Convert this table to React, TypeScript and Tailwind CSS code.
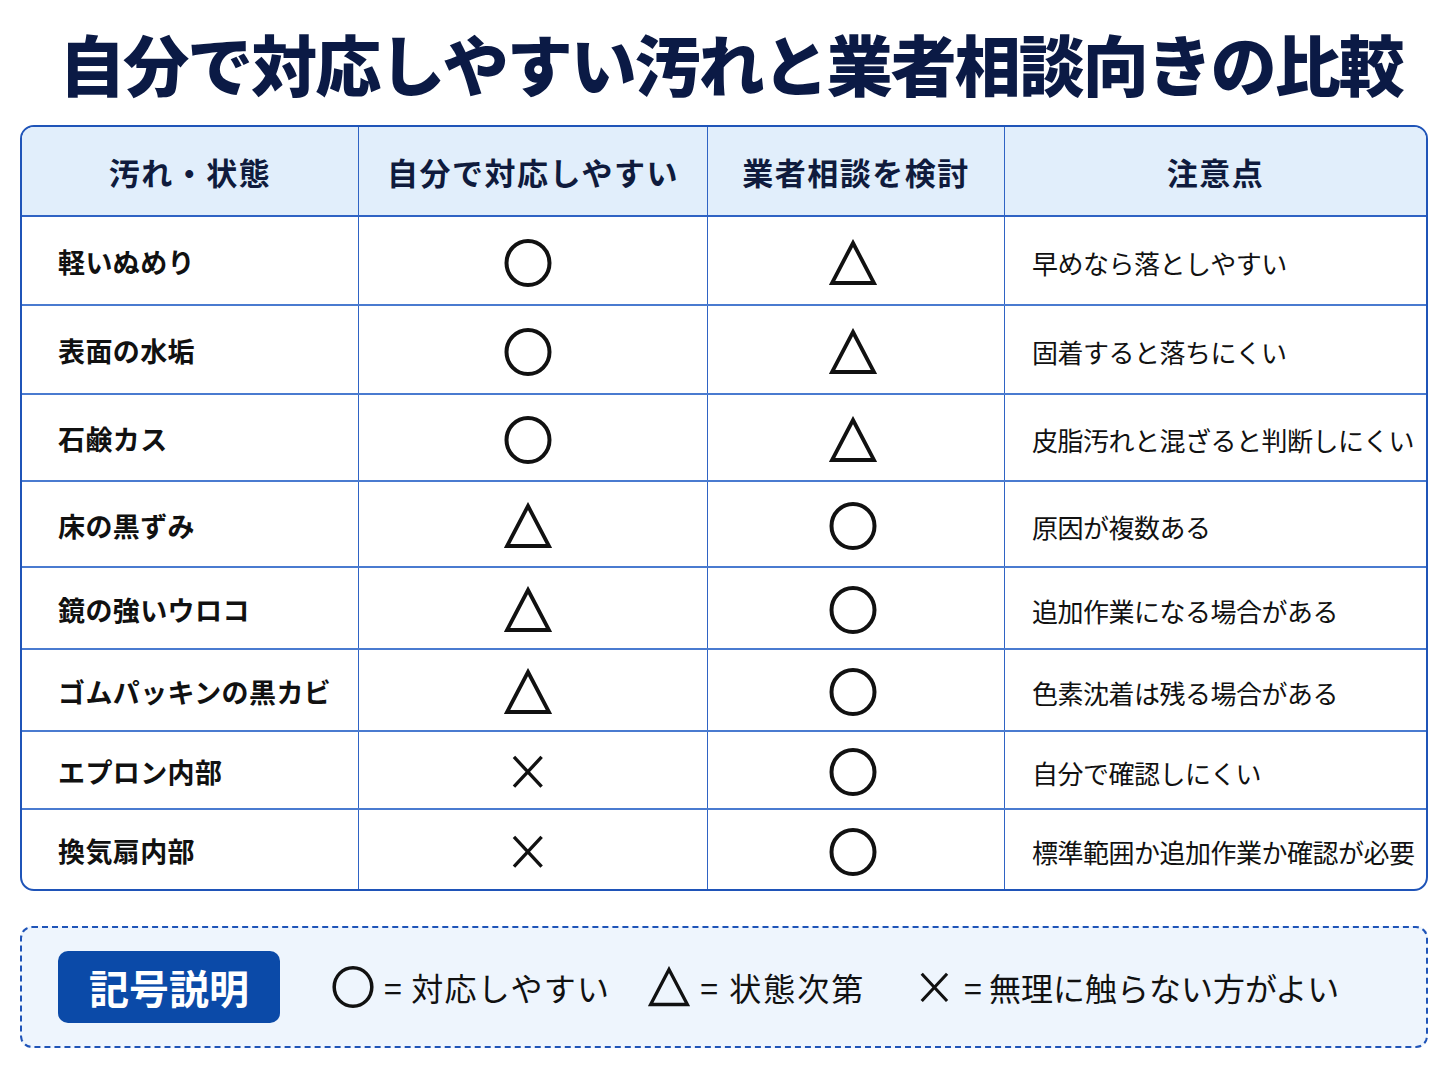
import React from 'react';

type Mark = 'o' | 't' | 'x';

const rows: { name: string; self: Mark; pro: Mark; note: string; h: string }[] = [
  { name: '軽いぬめり', self: 'o', pro: 't', note: '早めなら落としやすい', h: 'h-[89px]' },
  { name: '表面の水垢', self: 'o', pro: 't', note: '固着すると落ちにくい', h: 'h-[89px]' },
  { name: '石鹸カス', self: 'o', pro: 't', note: '皮脂汚れと混ざると判断しにくい', h: 'h-[87px]' },
  { name: '床の黒ずみ', self: 't', pro: 'o', note: '原因が複数ある', h: 'h-[86px]' },
  { name: '鏡の強いウロコ', self: 't', pro: 'o', note: '追加作業になる場合がある', h: 'h-[82px]' },
  { name: 'ゴムパッキンの黒カビ', self: 't', pro: 'o', note: '色素沈着は残る場合がある', h: 'h-[82px]' },
  { name: 'エプロン内部', self: 'x', pro: 'o', note: '自分で確認しにくい', h: 'h-[78px]' },
  { name: '換気扇内部', self: 'x', pro: 'o', note: '標準範囲か追加作業か確認が必要', h: 'h-[79px]' },
];

const Symbol = ({ mark, size = 48 }: { mark: Mark; size?: number }) => {
  if (mark === 'o')
    return (
      <svg width={size} height={size} viewBox="0 0 48 48">
        <ellipse cx="24" cy="24" rx="21.5" ry="22" fill="none" stroke="#111" strokeWidth="4" />
      </svg>
    );
  if (mark === 't')
    return (
      <svg width={size} height={size} viewBox="0 0 48 48">
        <path d="M24 4 L45 44 L3 44 Z" fill="none" stroke="#111" strokeWidth="3.8" strokeLinejoin="miter" />
      </svg>
    );
  return (
    <svg width={size * 0.7} height={size * 0.7} viewBox="0 0 34 34">
      <path d="M3 2 L31 32 M31 2 L3 32" fill="none" stroke="#111" strokeWidth="3.4" />
    </svg>
  );
};

const font = { fontFamily: '"Noto Sans CJK JP", "Noto Sans", sans-serif' };

export default function App() {
  return (
    <div className="w-[1448px] h-[1086px] bg-white flex flex-col items-center" style={font}>
      <h1 className="mt-[26px] pl-[14px] text-[66px] leading-[72px] font-black text-[#0b1a45] tracking-[-2px] whitespace-nowrap">
        自分で対応しやすい汚れと業者相談向きの比較
      </h1>

      <div className="mt-[27px] w-[1408px] border-2 border-[#1f54b8] rounded-[14px] overflow-hidden">
        <div className="grid grid-cols-[337px_349px_297px_1fr] h-[90px] bg-[#e1eefb] border-b-2 border-[#2f63c4] text-[31px] tracking-[1.5px] font-bold text-[#0f1b3d]">
          <div className="flex items-center justify-center pt-[3px] border-r border-[#2f63c4]">汚れ・状態</div>
          <div className="flex items-center justify-center pt-[3px] border-r border-[#2f63c4]">自分で対応しやすい</div>
          <div className="flex items-center justify-center pt-[3px] border-r border-[#2f63c4]">業者相談を検討</div>
          <div className="flex items-center justify-center pt-[3px]">注意点</div>
        </div>
        {rows.map((r, i) => (
          <div
            key={r.name}
            className={`grid grid-cols-[337px_349px_297px_1fr] ${r.h} ${i < rows.length - 1 ? 'border-b-2 border-[#4a7bd0]' : ''}`}
          >
            <div className="flex items-center pl-[36px] pt-[4px] border-r border-[#2f63c4] text-[27px] tracking-[0.4px] font-bold text-[#111]">{r.name}</div>
            <div className="flex items-center justify-center pr-[10px] pt-[4px] border-r border-[#2f63c4]">
              <Symbol mark={r.self} />
            </div>
            <div className="flex items-center justify-center pr-[6px] pt-[4px] border-r border-[#2f63c4]">
              <Symbol mark={r.pro} />
            </div>
            <div className="flex items-center pl-[27px] pt-[4px] text-[26px] tracking-[-0.5px] text-[#111] whitespace-nowrap">{r.note}</div>
          </div>
        ))}
      </div>

      <div className="mt-[35px] w-[1408px] h-[122px] border-2 border-dashed border-[#1f54b8] rounded-[12px] bg-[#eef5fd] flex items-center pl-[36px]">
        <div className="w-[222px] h-[72px] rounded-[10px] bg-[#0b4aa8] flex items-center justify-center text-white text-[40px] font-bold">
          記号説明
        </div>
        <div className="flex items-center ml-[52px] text-[32px] tracking-[1.2px] text-[#111]">
          <Symbol mark="o" size={42} />
          <span className="ml-[10px]">= 対応しやすい</span>
        </div>
        <div className="flex items-center ml-[38px] text-[32px] tracking-[2px] text-[#111]">
          <Symbol mark="t" size={42} />
          <span className="ml-[10px]">= 状態次第</span>
        </div>
        <div className="flex items-center ml-[54px] text-[32px] text-[#111]">
          <Symbol mark="x" size={44} />
          <span className="ml-[14px]">= 無理に触らない方がよい</span>
        </div>
      </div>
    </div>
  );
}
